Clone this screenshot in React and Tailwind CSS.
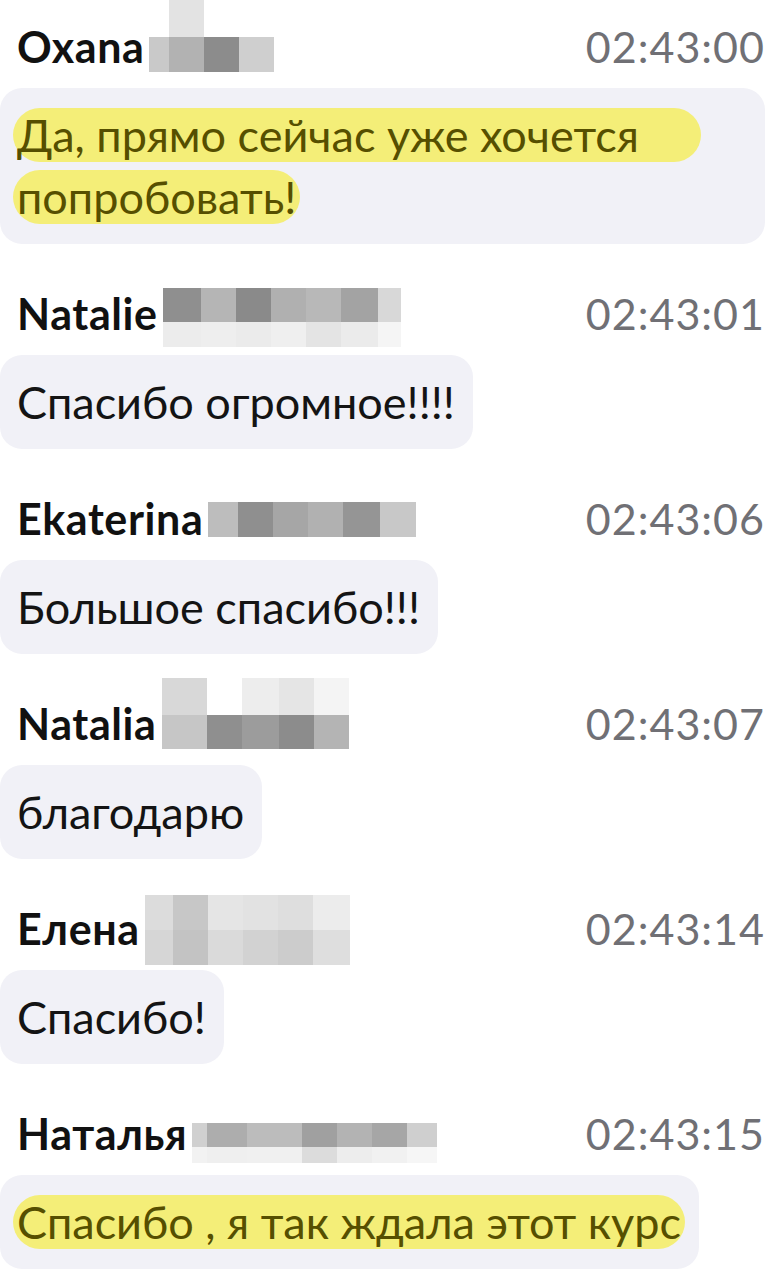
const messages = [
  {
    name: "Oxana",
    time: "02:43:00",
    lines: ["Да, прямо сейчас уже хочется", "попробовать!"],
    marked: true,
    tail: "w-[58px]",
    bubble: "w-[765px]",
    blurTop: "-mt-[22px]",
    blur: [
      [[20, "bg-transparent"], [35, "bg-[#e3e3e3]"], [70, "bg-transparent"]],
      [[20, "bg-[#c9c9c9]"], [35, "bg-[#b2b2b2]"], [35, "bg-[#8c8c8c]"], [35, "bg-[#cfcfcf]"]],
    ],
    rowH: ["h-[37px]", "h-[35px]"],
  },
  {
    name: "Natalie",
    time: "02:43:01",
    lines: ["Спасибо огромное!!!!"],
    blurTop: "-mt-[1px]",
    blur: [
      [[38, "bg-[#8f8f8f]"], [35, "bg-[#b5b5b5]"], [35, "bg-[#8a8a8a]"], [35, "bg-[#b0b0b0]"], [35, "bg-[#b8b8b8]"], [37, "bg-[#a3a3a3]"], [23, "bg-[#d8d8d8]"]],
      [[38, "bg-[#ececec]"], [35, "bg-[#eeeeee]"], [35, "bg-[#ebebeb]"], [35, "bg-[#efefef]"], [35, "bg-[#e4e4e4]"], [37, "bg-[#ebebeb]"], [23, "bg-[#f5f5f5]"]],
    ],
    rowH: ["h-[34px]", "h-[25px]"],
  },
  {
    name: "Ekaterina",
    time: "02:43:06",
    lines: ["Большое спасибо!!!"],
    blurTop: "mt-[8px]",
    blur: [
      [[30, "bg-[#bdbdbd]"], [35, "bg-[#8f8f8f]"], [35, "bg-[#a6a6a6]"], [35, "bg-[#b1b1b1]"], [37, "bg-[#959595]"], [36, "bg-[#c8c8c8]"]],
    ],
    rowH: ["h-[35px]"],
  },
  {
    name: "Natalia",
    time: "02:43:07",
    lines: ["благодарю"],
    blurTop: "-mt-[21px]",
    blur: [
      [[45, "bg-[#d8d8d8]"], [35, "bg-transparent"], [37, "bg-[#ededed]"], [35, "bg-[#e5e5e5]"], [35, "bg-[#f4f4f4]"]],
      [[45, "bg-[#c6c6c6]"], [35, "bg-[#8f8f8f]"], [37, "bg-[#9c9c9c]"], [35, "bg-[#8c8c8c]"], [35, "bg-[#b4b4b4]"]],
    ],
    rowH: ["h-[37px]", "h-[34px]"],
  },
  {
    name: "Елена",
    time: "02:43:14",
    lines: ["Спасибо!"],
    blurTop: "-mt-[9px]",
    blur: [
      [[28, "bg-[#dcdcdc]"], [35, "bg-[#c7c7c7]"], [35, "bg-[#e5e5e5]"], [35, "bg-[#e2e2e2]"], [35, "bg-[#dedede]"], [37, "bg-[#ececec]"]],
      [[28, "bg-[#d6d6d6]"], [35, "bg-[#c3c3c3]"], [35, "bg-[#dadada]"], [35, "bg-[#d2d2d2]"], [35, "bg-[#cccccc]"], [37, "bg-[#dedede]"]],
    ],
    rowH: ["h-[35px]", "h-[35px]"],
  },
  {
    name: "Наталья",
    time: "02:43:15",
    lines: ["Спасибо , я так ждала этот курс"],
    marked: true,
    blurTop: "mt-[14px]",
    blur: [
      [[15, "bg-[#d0d0d0]"], [40, "bg-[#adadad]"], [55, "bg-[#bcbcbc]"], [35, "bg-[#a0a0a0]"], [35, "bg-[#b3b3b3]"], [35, "bg-[#a6a6a6]"], [30, "bg-[#cfcfcf]"]],
      [[15, "bg-[#f2f2f2]"], [40, "bg-[#efefef]"], [55, "bg-[#f0f0f0]"], [35, "bg-[#dcdcdc]"], [35, "bg-[#ededed]"], [35, "bg-[#f1f1f1]"], [30, "bg-[#f6f6f6]"]],
    ],
    rowH: ["h-[24px]", "h-[16px]"],
  },
];

function Blur({ rows, heights, top }) {
  return (
    <div className={`ml-[5px] self-start flex flex-col ${top}`}>
      {rows.map((row, i) => (
        <div key={i} className={`flex ${heights[i]}`}>
          {row.map(([w, c], j) => (
            <div key={j} className={c} style={{ width: w }} />
          ))}
        </div>
      ))}
    </div>
  );
}

function Message({ m }) {
  return (
    <div className="flex flex-col">
      <div className="h-[50px] flex items-center justify-between pl-[17px]">
        <div className="flex items-center h-[50px]">
          <span className="text-[43px] leading-[50px] font-bold text-[#111] tracking-[0.6px]">
            {m.name}
          </span>
          <Blur rows={m.blur} heights={m.rowH} top={m.blurTop} />
        </div>
        <span className="text-[43px] leading-[50px] text-[#707075] tracking-[1px]">{m.time}</span>
      </div>
      <div className="mt-4 flex">
        <div className={`bg-[#f1f1f7] rounded-[22px] pl-[17px] pr-[18px] py-4 text-[45px] leading-[62px] text-[#141414] ${m.bubble || ""}`}>
          {m.marked ? (
            <span className="bg-[#f4ee78] text-[#564f00] rounded-full box-decoration-clone px-1 -mx-1">
              {m.lines.map((l, i) => (
                <span key={i}>
                  {l}
                  {i < m.lines.length - 1 && (
                    <>
                      {m.tail && <span className={`inline-block ${m.tail}`} />}
                      <br />
                    </>
                  )}
                </span>
              ))}
            </span>
          ) : (
            m.lines[0]
          )}
        </div>
      </div>
    </div>
  );
}

export default function App() {
  return (
    <div className="w-[773px] h-[1280px] overflow-hidden bg-white pt-[22px] pr-2 flex flex-col gap-[45px] font-['Lato','Open_Sans','Noto_Sans',sans-serif]">
      {messages.map((m) => (
        <Message key={m.time} m={m} />
      ))}
    </div>
  );
}
